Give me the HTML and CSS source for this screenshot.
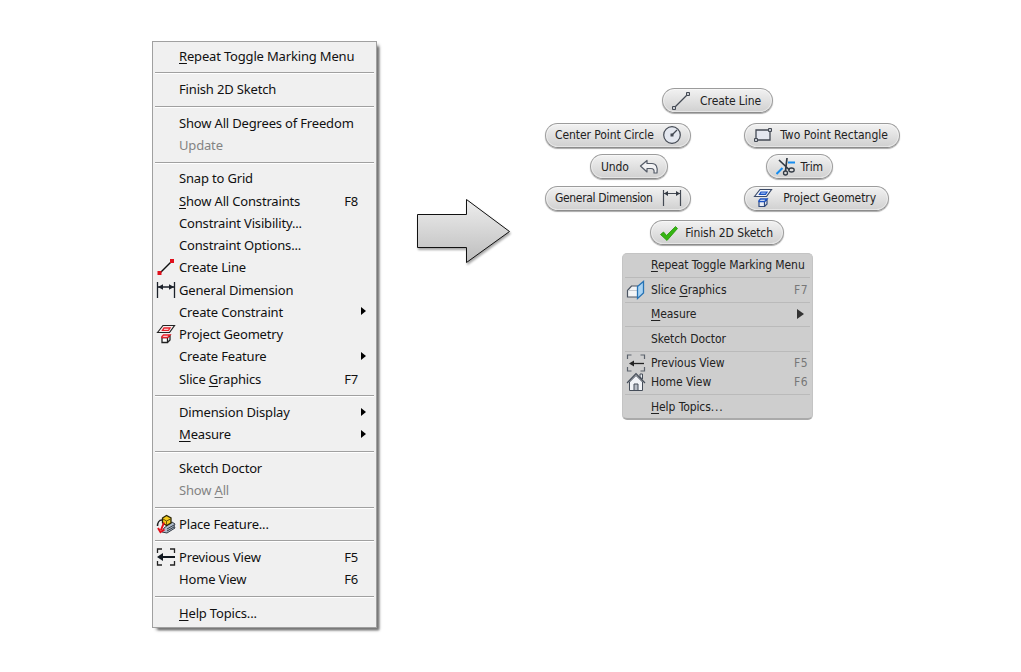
FILE: index.html
```html
<!DOCTYPE html>
<html lang="en">

<head>
    <meta charset="utf-8">
    <meta name="viewport" content="width=device-width, initial-scale=1.0">
    <title>Marking Menu</title>
    <link rel="stylesheet" href="styles.css">
</head>

<body>
    <main class="container">
        <!-- classic context menu -->
        <ul class="menu">
            <li><span class="label"><u>R</u>epeat Toggle Marking Menu</span></li>
            <li class="line"></li>
            <li><span class="label">Finish 2D Sketch</span></li>
            <li class="line"></li>
            <li><span class="label">Show All Degrees of Freedom</span></li>
            <li class="disabled"><span class="label">Update</span></li>
            <li class="line"></li>
            <li><span class="label">Snap to Grid</span></li>
            <li><span class="label"><u>S</u>how All Constraints</span><span class="key">F8</span></li>
            <li><span class="label">Constraint Visibility...</span></li>
            <li><span class="label">Constraint Options...</span></li>
            <li>
                <svg class="icon" viewBox="0 0 20 20"><path d="M4 16L16 4" stroke="#111" stroke-width="1.5"/><path d="M1.500 14h4v4h-4zM14 2h4v4h-4z" fill="#e0101c"/></svg>
                <span class="label">Create Line</span>
            </li>
            <li>
                <svg class="icon" viewBox="0 0 20 20"><path d="M1.500 2v16M18.500 2v16M2 7h16" stroke="#1c222b" stroke-width="1.300" fill="none"/><path d="M2 7l5-2.800v5.600zM18 7l-5-2.800v5.600z" fill="#1c222b"/></svg>
                <span class="label">General Dimension</span>
            </li>
            <li><span class="label">Create Constraint</span><span class="arrow"></span></li>
            <li>
                <svg class="icon" viewBox="0 0 20 20"><path d="M1.500 8.500L7 1.500h11.500L13.500 8.500z" fill="#f6eeee" stroke="#222" stroke-width="1.200"/><path d="M6.500 6.300l1.500-2.300h6l-1.500 2.300z" fill="#fff" stroke="#e8202a" stroke-width="1.300"/><path d="M6 13.500h5.500v5H6zM11.500 13.500l2.500-2v4.500l-2.500 2.500" fill="#fff" stroke="#222" stroke-width="1.300"/><path d="M6 13.500v-1L7.500 11H14l-2.500 2.500z" fill="#fff" stroke="#e8202a" stroke-width="1.400"/></svg>
                <span class="label">Project Geometry</span>
            </li>
            <li><span class="label">Create Feature</span><span class="arrow"></span></li>
            <li><span class="label">Slice <u>G</u>raphics</span><span class="key">F7</span></li>
            <li class="line"></li>
            <li><span class="label">Dimension Display</span><span class="arrow"></span></li>
            <li><span class="label"><u>M</u>easure</span><span class="arrow"></span></li>
            <li class="line"></li>
            <li><span class="label">Sketch Doctor</span></li>
            <li class="disabled"><span class="label">Show <u>A</u>ll</span></li>
            <li class="line"></li>
            <li>
                <svg class="icon" viewBox="0 0 20 20"><path d="M8 14l8-6 3 2-1 2 1 2-8 5-5-1z" fill="#aebccc" stroke="#343b45"/><path d="M11 15l7-4M11 17l7-4" stroke="#343b45"/><path d="M6.500 4l4-2.500 4.500 2.500v5l-4.500 2.500L6.500 9z" fill="#f3cb1c" stroke="#2c2708" stroke-width="1.300"/><path d="M7 5l3.500 2L14.500 5M10.500 7v4" stroke="#6c5608" fill="none"/><path d="M6 6C3 6 1.500 9 1.500 12" stroke="#222" stroke-width="1.500" fill="none"/><path d="M8 8.500L5 16M2 14l2.500 4 4-2.500" stroke="#e4101a" stroke-width="2" fill="none"/></svg>
                <span class="label">Place Feature...</span>
            </li>
            <li class="line"></li>
            <li>
                <svg class="icon" viewBox="0 0 20 20"><path d="M1.500 6V2H6M14 2h4.500v4M1.500 14v4H6M14 18h4.500v-4" stroke="#222" stroke-width="1.300" fill="none"/><path d="M5 10h14" stroke="#111820" stroke-width="2"/><path d="M1 10l6-4v8z" fill="#111820"/></svg>
                <span class="label">Previous View</span><span class="key">F5</span>
            </li>
            <li><span class="label">Home View</span><span class="key">F6</span></li>
            <li class="line"></li>
            <li><span class="label"><u>H</u>elp Topics...</span></li>
        </ul>

        <svg class="pointer" viewBox="0 0 110 80">
            <defs>
                <linearGradient id="grey" x1="0" y1="0" x2="0" y2="1">
                    <stop offset="0" stop-color="#eee"/>
                    <stop offset="1" stop-color="#bdbdbd"/>
                </linearGradient>
            </defs>
            <path d="M7.500 24.500h49v-15l43 32-43 31v-15h-49z" fill="url(#grey)" stroke="#111"/>
        </svg>

        <!-- marking menu -->
        <section class="marking">
            <div class="ring north">
                <div class="pill create">
                    <svg class="icon" viewBox="0 0 20 20"><path d="M3.500 16.500l13-13" stroke="#444a54" stroke-width="1.300"/><path d="M1.500 15.500h3v3h-3zM15.500 1.500h3v3h-3z" fill="#c9ccd1" stroke="#444a54"/></svg>
                    <span>Create Line</span>
                </div>
            </div>
            <div class="ring upper">
                <div class="pill left circle">
                    <span>Center Point Circle</span>
                    <svg class="icon" viewBox="0 0 20 20"><circle cx="10" cy="10" r="8.300" fill="#e3e7ef" stroke="#444a54" stroke-width="1.200"/><path d="M10 10l5-5" stroke="#444a54" stroke-width="1.200"/><path d="M8.500 8.500h3v3h-3z" fill="#444a54"/></svg>
                </div>
                <div class="pill rectangle">
                    <svg class="icon" viewBox="0 0 20 20"><path d="M3 5h14v10H3z" fill="#e3e6ef" stroke="#444a54" stroke-width="1.300"/><path d="M1.500 13.500h3v3h-3zM15.500 3.500h3v3h-3z" fill="#c4c8cf" stroke="#444a54"/></svg>
                    <span>Two Point Rectangle</span>
                </div>
            </div>
            <div class="ring middle">
                <div class="pill left undo">
                    <span>Undo</span>
                    <svg class="icon" viewBox="0 0 20 20"><path d="M1.500 9L8 3.500v3h5c4 0 6 3.500 5 9.500h-3c.5-3-.5-4.500-3-4.500H8v3.500z" fill="#f2f2f4" stroke="#555c68" stroke-width="1.200" stroke-linejoin="round"/></svg>
                </div>
                <div class="pill trim">
                    <svg class="icon" viewBox="0 0 20 20"><path d="M.5 17l6-6M12 5.500h7" stroke="#168df0" stroke-width="2"/><path d="M3 3l10.500 10M11 1L9.500 14" stroke="#333b45" stroke-width="1.700"/><circle cx="9.500" cy="16" r="2" fill="none" stroke="#333b45" stroke-width="1.300"/><ellipse cx="15.500" cy="13" rx="2.700" ry="2" fill="none" stroke="#333b45" stroke-width="1.300"/></svg>
                    <span>Trim</span>
                </div>
            </div>
            <div class="ring lower">
                <div class="pill left general">
                    <span>General Dimension</span>
                    <svg class="icon" viewBox="0 0 20 20"><path d="M1.500 2v16M18.500 2v16M2 5.500h16" stroke="#444a54" stroke-width="1.200" fill="none"/><path d="M2 5.500l4-2.500v5zM18 5.500l-4-2.500v5z" fill="#343a44"/></svg>
                </div>
                <div class="pill project">
                    <svg class="icon" viewBox="0 0 20 20"><path d="M1.500 8.500L7 1.500h11.500L13.500 8.500z" fill="#f0f3fa" stroke="#3b4a68" stroke-width="1.200"/><path d="M6.500 6.300l1.500-2.300h6l-1.500 2.300z" fill="#9fbcf0" stroke="#1b52c4" stroke-width="1.200"/><path d="M6 13.500h5.500v5H6zM11.500 13.500l2.500-2v4.500l-2.500 2.500" fill="#e8edf7" stroke="#334b7c" stroke-width="1.200"/><path d="M6 13.500v-1L7.500 11H14l-2.500 2.500z" fill="#fff" stroke="#1b52c4" stroke-width="1.300"/></svg>
                    <span>Project Geometry</span>
                </div>
            </div>
            <div class="ring south">
                <div class="pill finish">
                    <svg class="icon" viewBox="0 0 20 20"><path d="M1.500 11.500l3-2.500 3 3.500L16.500 3.500l2 2L8 17.500z" fill="#35b512" stroke="#249408" stroke-width=".8"/></svg>
                    <span>Finish 2D Sketch</span>
                </div>
            </div>

            <ul class="overflow">
                <li><span class="label"><u>R</u>epeat Toggle Marking Menu</span></li>
                <li class="line"></li>
                <li>
                    <svg class="icon" viewBox="0 0 20 20"><path d="M1.500 10.500l4-4.500H12v11H1.500z" fill="#f2f4f6" stroke="#4c5562" stroke-width="1.200"/><path d="M2 10.500h9" stroke="#c2c7cd"/><path d="M11.500 6.500l6-5v11.500l-6 5.500z" fill="#a9d3f3" stroke="#2673b5" stroke-width="1.300"/></svg>
                    <span class="label">Slice <u>G</u>raphics</span><span class="key">F7</span>
                </li>
                <li class="line"></li>
                <li><span class="label"><u>M</u>easure</span><span class="arrow"></span></li>
                <li class="line"></li>
                <li><span class="label">Sketch Doctor</span></li>
                <li class="line"></li>
                <li>
                    <svg class="icon" viewBox="0 0 20 20"><path d="M1.500 6V2H5.500M14.500 2h4v4M1.500 14v4h4M14.500 18h4v-4" stroke="#5b626c" stroke-width="1.200" fill="none"/><path d="M5 10.500h13" stroke="#222" stroke-width="1.300"/><path d="M3 10.500l5-3v6z" fill="#222"/></svg>
                    <span class="label">Previous View</span><span class="key">F5</span>
                </li>
                <li>
                    <svg class="icon" viewBox="0 0 20 20"><path d="M14 2h2.500v5L14 5z" fill="#e9edf2" stroke="#454d59"/><path d="M3.500 10v8.500h13V10L10 3.500z" fill="#f1f3f7" stroke="#454d59"/><path d="M1 11l9-9.300L19 11" stroke="#454d59" stroke-width="1.200" fill="none"/><path d="M8 18.500V12h4v6.500z" fill="#b8bdc6" stroke="#454d59"/></svg>
                    <span class="label">Home View</span><span class="key">F6</span>
                </li>
                <li class="line"></li>
                <li><span class="label"><u>H</u>elp Topics<span class="dots">...</span></span></li>
            </ul>
        </section>
    </main>
</body>

</html>
```
FILE: styles.css
```css
body {
    margin: 0;
    background-color: #fff;
    color: #111;
    font-family: "Noto Sans", "Open Sans", sans-serif;
}

* {
    box-sizing: border-box;
}

ul {
    list-style: none;
    margin: 0;
    padding: 0;
}

u {
    text-underline-offset: 2px;
    text-decoration-thickness: 1px;
}

.container {
    display: flex;
    align-items: flex-start;
    min-height: 100vh;
    padding-top: 41px;
    padding-left: 152px;
}

.icon {
    flex: none;
    width: 20px;
    height: 20px;
}

/* classic menu */

.menu {
    width: 225px;
    height: 587px;
    padding: 3px 2px;
    background-color: #f0f0f0;
    border: 1px solid #a0a0a0;
    box-shadow: 4px 4px 2px -2px #777, 3px 3px 3px -1px #999;
    font-size: 13px;
    letter-spacing: -.17px;
}

.menu li {
    display: flex;
    align-items: center;
    height: 22.250px;
    padding: 0 16px 1px 1px;
    white-space: nowrap;
}

.menu .label {
    flex: 1;
    padding-left: 23px;
}

.menu .icon + .label {
    padding-left: 3px;
}

.menu .disabled {
    color: #838383;
}

.menu .line,
.overflow .line {
    padding: 0;
}

.menu .line {
    height: 11.250px;
    padding-top: 1px;
}

.menu .line::after {
    content: "";
    flex: 1;
    height: 1px;
    background-color: #a0a0a0;
    border-bottom: 1px solid #fff;
}

.arrow {
    border-left: 5px solid #000;
    border-top: 4px solid transparent;
    border-bottom: 4px solid transparent;
}

.menu .arrow {
    margin: -1px -8px 0 0;
}

.pointer {
    width: 110px;
    height: 80px;
    margin: 149px 0 0 33px;
    filter: drop-shadow(1px 2px 1px rgba(0, 0, 0, .35));
}

/* marking menu */

.marking {
    width: 356px;
    margin: 47px 0 0 25px;
    font-family: "DejaVu Sans Condensed", "DejaVu Sans", sans-serif;
    font-stretch: condensed;
    font-size: 12px;
    letter-spacing: -.08px;
    color: #222;
}

.ring {
    display: flex;
}

.pill {
    display: flex;
    align-items: center;
    justify-content: space-between;
    height: 25px;
    padding: 0 11px 0 8px;
    border: 1px solid #9c9c9c;
    border-bottom-color: #8c8c8c;
    border-radius: 13px;
    background: linear-gradient(#f2f2f2, #d0d0d0);
    box-shadow: 0 1px 1px #aaa, inset 0 0 0 1px rgba(255, 255, 255, .45);
    white-space: nowrap;
}

.left {
    padding: 0 8px 0 9px;
}

.north {
    padding-left: 117px;
    margin-bottom: 9.500px;
}

.upper {
    gap: 53px;
    margin-bottom: 6.500px;
}

.middle {
    gap: 98px;
    padding-left: 45px;
    margin-bottom: 6.500px;
}

.lower {
    gap: 53px;
    margin-bottom: 9.500px;
}

.south {
    padding-left: 105px;
    margin-bottom: 8px;
}

.create {
    width: 111px;
}

.circle,
.general {
    width: 146px;
}

.general {
    letter-spacing: -.34px;
}

.rectangle {
    width: 156px;
    letter-spacing: .02px;
}

.undo {
    width: 78px;
    padding-left: 10px;
}

.trim {
    width: 67px;
    padding: 0 9px;
}

.project {
    width: 145px;
    padding-right: 12px;
}

.finish {
    width: 134px;
    padding-right: 10px;
}

.overflow {
    width: 191px;
    height: 167px;
    margin-left: 77px;
    padding: 2px 2px 0;
    background-color: #cecece;
    border: 1px solid #c4c4c4;
    border-bottom: 2px solid #aaa;
    border-radius: 5px;
}

.overflow li {
    display: flex;
    align-items: center;
    height: 19px;
    padding: 0 2px 1px 1px;
    white-space: nowrap;
}

.overflow .label {
    flex: 1;
    padding-left: 25px;
}

.overflow .icon + .label {
    padding-left: 5px;
}

.overflow .key {
    color: #777;
    letter-spacing: .4px;
}

.dots {
    letter-spacing: .8px;
}

.overflow .line {
    height: 5.500px;
}

.overflow .line::after {
    content: "";
    flex: 1;
    height: 1px;
    background-color: #bababa;
}

.overflow .arrow {
    margin-right: 4px;
    border-left: 7px solid #333;
    border-top-width: 5px;
    border-bottom-width: 5px;
}
```
